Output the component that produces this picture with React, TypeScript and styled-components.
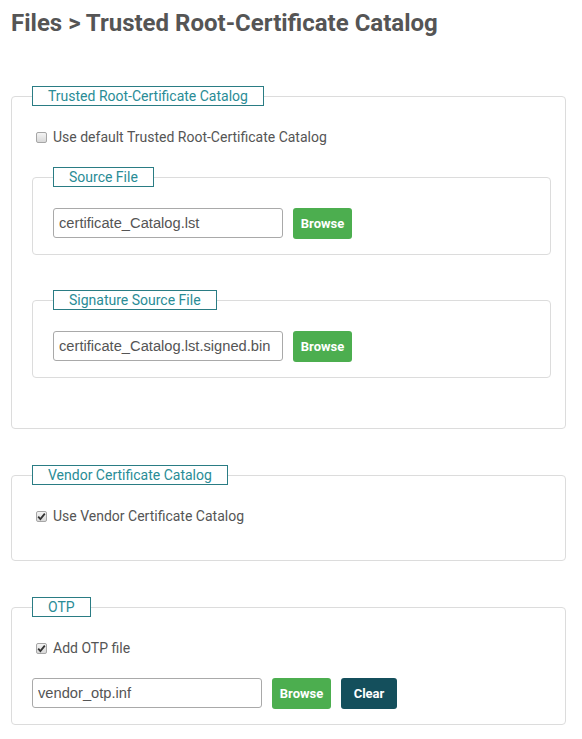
import React from "react";
import styled, { createGlobalStyle } from "styled-components";

const GlobalStyle = createGlobalStyle`
	body {
		margin: 8px;
		background: #fff;
		font-family: Roboto, "Liberation Sans", Arial, sans-serif;
		color: #555;
	}
`;

const Page = styled.div`
	padding: 0 8px 0 3px;
`;

const Title = styled.h1`
	margin: 1px 0 49px;
	font-size: 24px;
	line-height: 28px;
	font-weight: 700;
	color: #555;
`;

const Panel = styled.fieldset<{ $inner?: boolean }>`
	margin: 0 0 ${(p) => (p.$inner ? "35px" : "36px")};
	min-width: 0;
	padding: ${(p) => (p.$inner ? "0 20px 15px 20px" : "0 14px 15px 20px")};
	border: 1px solid #dcdcdc;
	border-radius: 4px;

	& + & {
		margin-top: ${(p) => (p.$inner ? "1px" : "0")};
	}
`;

const Legend = styled.legend`
	margin: 0;
	padding: 0 15px 0 15px;
	border: 1px solid #2a7c84;
	font-size: 14px;
	line-height: 18px;
	color: #2a8c96;
	margin-bottom: 21px;
`;

const CheckRow = styled.label<{ $last?: boolean }>`
	display: flex;
	align-items: center;
	height: 20px;
	margin-bottom: ${(p) => (p.$last ? "19px" : "20px")};
	font-size: 14px;
	color: #555;
`;

const Box = styled.span<{ $checked?: boolean }>`
	display: inline-flex;
	align-items: center;
	justify-content: center;
	box-sizing: border-box;
	width: 11px;
	height: 11px;
	margin: 0 6px 0 4px;
	border: 1px solid #a6a6a6;
	border-radius: 2px;
	background: linear-gradient(#f4f4f4, #d8d8d8);
`;

const FileRow = styled.div`
	display: flex;
	align-items: flex-start;
	gap: 10px;
`;

const FileInput = styled.input`
	box-sizing: border-box;
	width: 230px;
	height: 30px;
	margin: 0;
	padding: 0 5px;
	border: 1px solid #a9a9a9;
	border-radius: 3px;
	font-family: "Liberation Sans", Arial, sans-serif;
	font-size: 14.7px;
	color: #555;
	outline: none;
`;

const Button = styled.button<{ $variant?: "green" | "dark"; $w: number }>`
	width: ${(p) => p.$w}px;
	height: 31px;
	margin: 0;
	padding: 0;
	border: none;
	border-radius: 3px;
	background: ${(p) => (p.$variant === "dark" ? "#144f5c" : "#4cae4f")};
	color: #fff;
	font-family: Roboto, "Liberation Sans", Arial, sans-serif;
	font-size: 13px;
	font-weight: 700;
	cursor: pointer;
`;

const Check = ({ checked }: { checked?: boolean }) => (
	<Box $checked={checked}>
		{checked && (
			<svg width="9" height="9" viewBox="0 0 9 9">
				<path d="M1.2 4.6 L3.4 7 L7.8 1.6" fill="none" stroke="#333" strokeWidth="1.8" />
			</svg>
		)}
	</Box>
);

const FilePicker = ({ value, clear }: { value: string; clear?: boolean }) => (
	<FileRow>
		<FileInput defaultValue={value} readOnly />
		<Button $variant="green" $w={59}>Browse</Button>
		{clear && <Button $variant="dark" $w={56}>Clear</Button>}
	</FileRow>
);

export default function App() {
	return (
		<Page>
			<GlobalStyle />
			<Title>Files &gt; Trusted Root-Certificate Catalog</Title>

			<Panel>
				<Legend>Trusted Root-Certificate Catalog</Legend>
				<CheckRow>
					<Check />
					Use default Trusted Root-Certificate Catalog
				</CheckRow>
				<Panel $inner>
					<Legend>Source File</Legend>
					<FilePicker value="certificate_Catalog.lst" />
				</Panel>
				<Panel $inner>
					<Legend>Signature Source File</Legend>
					<FilePicker value="certificate_Catalog.lst.signed.bin" />
				</Panel>
			</Panel>

			<Panel>
				<Legend>Vendor Certificate Catalog</Legend>
				<CheckRow $last>
					<Check checked />
					Use Vendor Certificate Catalog
				</CheckRow>
			</Panel>

			<Panel>
				<Legend>OTP</Legend>
				<CheckRow>
					<Check checked />
					Add OTP file
				</CheckRow>
				<FilePicker value="vendor_otp.inf" clear />
			</Panel>
		</Page>
	);
}
